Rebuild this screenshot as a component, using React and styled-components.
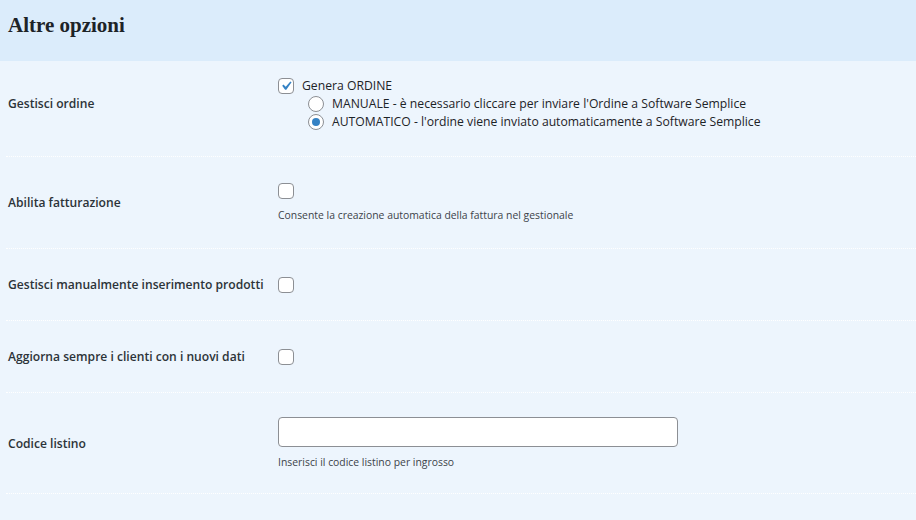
import React from "react";
import styled, { createGlobalStyle } from "styled-components";

const Global = createGlobalStyle`
    body {
        margin: 0;
        background: #edf5fd;
        font-family: "Open Sans", "Noto Sans", sans-serif;
        color: #1d2327;
    }
`

const Page = styled.div`
    width: 916px;
    height: 520px;
    background: #edf5fd;
    overflow: hidden;
`

const Header = styled.header`
    height: 61px;
    background: #dbecfb;
    display: flex;
    align-items: center;
    padding-left: 8px;
    box-sizing: border-box;
`

const Title = styled.h2`
    margin: 0 0 10px;
    font-family: "Liberation Serif", "DejaVu Serif", serif;
    font-weight: bold;
    font-size: 21px;
    color: #1d2327;
`

const Table = styled.div`
    padding-left: 6px;
`

const Row = styled.div`
    display: grid;
    grid-template-columns: 272px 1fr;
    align-items: center;
    height: ${p => p.$h}px;
    padding-bottom: ${p => p.$pb || 0}px;
    box-sizing: border-box;
    border-bottom: 1px dotted #ffffff;
`

const Label = styled.div`
    padding-left: 2px;
    font-size: 12.1px;
    font-weight: 600;
    color: #2c3338;
    white-space: nowrap;
`

const Cell = styled.div`
    display: flex;
    flex-direction: column;
    align-items: flex-start;
`

const Option = styled.label`
    display: flex;
    align-items: center;
    height: 18px;
    gap: 8px;
    font-size: 12.2px;
    color: #1d2327;
    margin-left: ${p => p.$indent || 0}px;
`

const Box = styled.span`
    width: 16px;
    height: 16px;
    box-sizing: border-box;
    border: 1px solid #8c8f94;
    border-radius: 4px;
    background: #fff;
    display: flex;
    align-items: center;
    justify-content: center;
    flex-shrink: 0;
`

const Radio = styled.span`
    width: 16px;
    height: 16px;
    box-sizing: border-box;
    border: 1px solid #8c8f94;
    border-radius: 50%;
    background: #fff;
    display: flex;
    align-items: center;
    justify-content: center;
    flex-shrink: 0;
    &::after {
        content: "";
        width: 8px;
        height: 8px;
        border-radius: 50%;
        background: ${p => (p.$on ? "#3582c4" : "transparent")};
    }
`

const Description = styled.p`
    margin: ${p => p.$mt || 8}px 0 0;
    font-size: 10.4px;
    color: #3c434a;
`

const TextInput = styled.input`
    width: 400px;
    height: 30px;
    box-sizing: border-box;
    border: 1px solid #8c8f94;
    border-radius: 4px;
    background: #fff;
    outline: none;
    padding: 0 8px;
`

const Check = () => (
    <svg width="20" height="20" viewBox="0 0 20 20" style={{ margin: "-2px" }}>
        <path d="M14.83 4.89l1.34.94-5.81 8.38H9.02L5.78 9.67l1.34-1.25 2.57 2.4z" fill="#3582c4" />
    </svg>
)

const Checkbox = ({ checked }) => <Box>{checked && <Check />}</Box>

const App = () => {
    return (
        <Page>
            <Global />
            <Header>
                <Title>Altre opzioni</Title>
            </Header>
            <Table>
                <Row $h={96} $pb={10}>
                    <Label>Gestisci ordine</Label>
                    <Cell>
                        <Option>
                            <Checkbox checked />
                            Genera ORDINE
                        </Option>
                        <Option $indent={30}>
                            <Radio />
                            MANUALE - è necessario cliccare per inviare l'Ordine a Software Semplice
                        </Option>
                        <Option $indent={30}>
                            <Radio $on />
                            AUTOMATICO - l'ordine viene inviato automaticamente a Software Semplice
                        </Option>
                    </Cell>
                </Row>
                <Row $h={92}>
                    <Label>Abilita fatturazione</Label>
                    <Cell>
                        <Checkbox />
                        <Description $mt={9}>Consente la creazione automatica della fattura nel gestionale</Description>
                    </Cell>
                </Row>
                <Row $h={72}>
                    <Label>Gestisci manualmente inserimento prodotti</Label>
                    <Cell>
                        <Checkbox />
                    </Cell>
                </Row>
                <Row $h={72}>
                    <Label>Aggiorna sempre i clienti con i nuovi dati</Label>
                    <Cell>
                        <Checkbox />
                    </Cell>
                </Row>
                <Row $h={101}>
                    <Label>Codice listino</Label>
                    <Cell>
                        <TextInput type="text" />
                        <Description $mt={8}>Inserisci il codice listino per ingrosso</Description>
                    </Cell>
                </Row>
            </Table>
        </Page>
    )
}

export default App;
